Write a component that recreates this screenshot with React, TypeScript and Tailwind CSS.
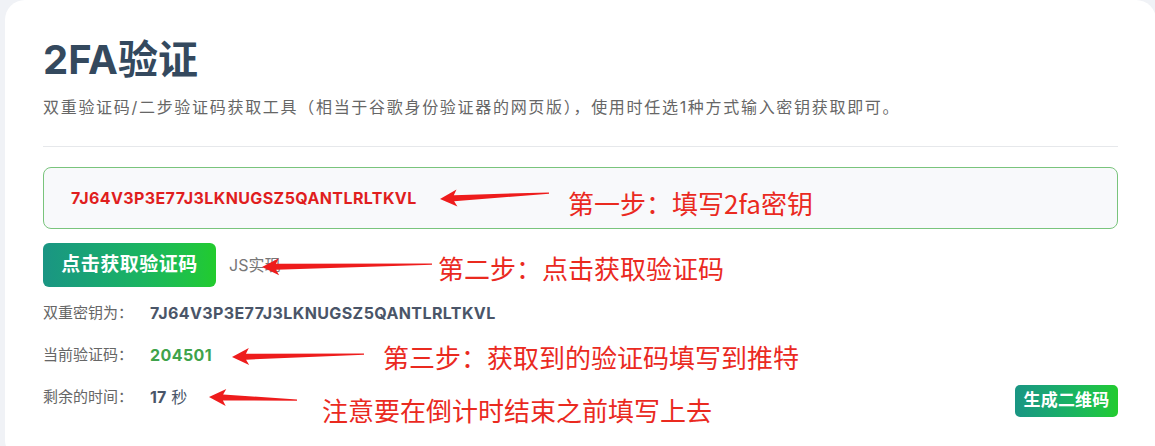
import React from 'react';

const cjk = '"Inter", "Noto Sans CJK SC", sans-serif';
const secret = '7J64V3P3E77J3LKNUGSZ5QANTLRLTKVL';

// arrow polygon: tip -> tail, head length / width in px
const arrowPoints = (tx: number, ty: number, ex: number, ey: number) => {
  const len = Math.hypot(ex - tx, ey - ty);
  const ux = (ex - tx) / len;
  const uy = (ey - ty) / len;
  const nx = -uy;
  const ny = ux;
  const p = (a: number, b: number) => `${tx + a * ux + b * nx},${ty + a * uy + b * ny}`;
  return [
    p(0, 0),
    p(17, 8.5),
    p(14, 3),
    p(len, 0.8),
    p(len, -0.6),
    p(14, -3),
    p(17, -8.5),
  ].join(' ');
};

const arrows = [
  [440, 199, 549, 193],
  [262, 267, 432, 264],
  [232, 357, 364, 354],
  [209, 397, 297, 400],
];

const notes = [
  { text: '第一步：填写2fa密钥', left: 'left-[568px]', top: 'top-[190px]' },
  { text: '第二步：点击获取验证码', left: 'left-[438px]', top: 'top-[255px]' },
  { text: '第三步：获取到的验证码填写到推特', left: 'left-[383px]', top: 'top-[344px]' },
  { text: '注意要在倒计时结束之前填写上去', left: 'left-[322px]', top: 'top-[397px]' },
];

const App: React.FC = () => {
  return (
    <div className="relative w-full h-[446px] overflow-hidden bg-[#f0f2f6]" style={{ fontFamily: cjk }}>
      <div className="ml-[5px] w-[1151px] min-h-[460px] bg-white rounded-[20px] px-[38px] pt-[36px]">
        <h1 className="text-[40px] leading-[48px] font-bold text-[#34495e]">2FA验证</h1>
        <p className="mt-[11px] text-[16px] leading-[24px] tracking-[1.7px] text-[#666]">
          双重验证码/二步验证码获取工具（相当于谷歌身份验证器的网页版），使用时任选1种方式输入密钥获取即可。
        </p>
        <div className="mt-[27px] border-t border-[#e6e8eb]" />

        {/* secret input */}
        <div className="mt-[20px] h-[62px] flex items-center px-[27px] rounded-[8px] border border-[#79c47c] bg-[#f8f9fb]">
          <span className="text-[16px] font-bold text-[#e01e1e] tracking-[0.4px]">{secret}</span>
        </div>

        <div className="mt-[14px] flex items-center gap-[13px]">
          <button className="h-[44px] w-[173px] rounded-[6px] bg-linear-to-r from-[#1a9583] to-[#22cb2c] text-white text-[19px] font-bold tracking-[0.5px]">
            点击获取验证码
          </button>
          <span className="text-[16px] text-[#777]">JS实现</span>
        </div>

        <div className="mt-[5px] text-[15px] text-[#666]">
          <div className="h-[42px] flex items-center">
            <span className="w-[107px]">双重密钥为：</span>
            <span className="text-[16px] font-bold text-[#4a5568] tracking-[0.4px]">{secret}</span>
          </div>
          <div className="h-[42px] flex items-center">
            <span className="w-[107px]">当前验证码：</span>
            <span className="text-[16px] font-bold text-[#3fa34b] tracking-[0.4px]">204501</span>
          </div>
          <div className="h-[42px] flex items-center justify-between">
            <div className="flex items-center">
              <span className="w-[107px]">剩余的时间：</span>
              <span className="text-[16px] font-bold text-[#4a5568]">17</span>
              <span className="ml-[5px] text-[16px] text-[#4a5568]">秒</span>
            </div>
            <button className="self-end mb-[1px] h-[32px] w-[103px] rounded-[5px] bg-linear-to-r from-[#1a9583] to-[#22cb2c] text-white text-[17px] font-bold tracking-[0.2px]">
              生成二维码
            </button>
          </div>
        </div>
      </div>

      {/* red annotations */}
      <svg className="absolute inset-0 pointer-events-none" width="1155" height="446">
        {arrows.map(([a, b, c, d], i) => (
          <polygon key={i} points={arrowPoints(a, b, c, d)} fill="#ee1c1c" />
        ))}
      </svg>
      {notes.map((n) => (
        <div
          key={n.text}
          className={`absolute ${n.left} ${n.top} text-[26px] leading-[26px] text-[#ea2a1f] whitespace-nowrap`}
          style={{ fontFamily: '"Noto Sans CJK SC", sans-serif' }}
        >
          {n.text}
        </div>
      ))}
    </div>
  );
};

export default App;
